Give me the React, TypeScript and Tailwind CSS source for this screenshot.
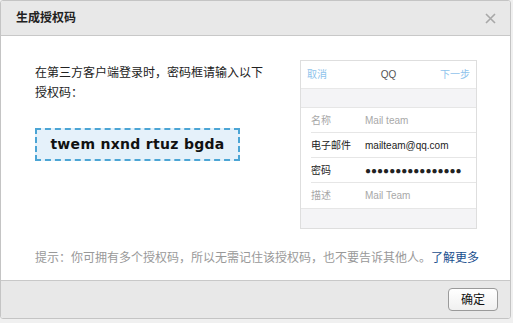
import React from "react";

const cjk = { fontFamily: '"Liberation Sans", "Noto Sans CJK SC", sans-serif' };

function Row({ label, value, dark, last }: { label: string; value: string; dark?: boolean; last?: boolean }) {
  return (
    <div className="pl-[10px] bg-white">
      <div className={`flex items-center h-[25px] ${last ? "" : "border-b border-[#e6e6e6]"}`}>
        <div className={`w-[54px] text-[10px] ${dark ? "text-[#222]" : "text-[#a8a8a8]"}`}>{label}</div>
        <div className={`text-[10px] ${dark ? "text-[#222]" : "text-[#a8a8a8]"}`}>{value}</div>
      </div>
    </div>
  );
}

export default function App() {
  return (
    <div className="w-[513px] h-[323px] bg-[#f0f0f0]" style={cjk}>
      <div className="w-[511px] h-[319px] flex flex-col border border-[#c4c4c4] rounded-[3px] bg-white overflow-hidden">
        <div className="h-[35px] shrink-0 flex items-center justify-between bg-[#e8e8e8] border-b border-[#c8c8c8] pl-[15px] pr-[14px]">
          <div className="text-[12px] font-bold text-[#222]">生成授权码</div>
          <svg width="11" height="11" viewBox="0 0 11 11">
            <path d="M1 1 L10 10 M10 1 L1 10" stroke="#a8a8a8" strokeWidth="1.6" />
          </svg>
        </div>
        <div className="flex-1 flex flex-col pl-[34px]">
          <div className="flex">
            <div className="w-[265px] pt-[27px]">
              <div className="text-[12px] leading-[20px] text-[#222]">
                在第三方客户端登录时，密码框请输入以下
                <br />
                授权码：
              </div>
              <div className="mt-[25px] w-[205px] h-[33px] border-2 border-dashed border-[#4ba5d5] bg-[#e5f1fa] flex items-center justify-center">
                <span
                  className="text-[14px] font-bold text-[#111] tracking-[0.3px]"
                  style={{ fontFamily: '"DejaVu Sans", sans-serif' }}
                >
                  twem nxnd rtuz bgda
                </span>
              </div>
            </div>
            <div className="mt-[24px] w-[177px] border border-[#dedede] bg-[#f4f4f6] flex flex-col">
              <div className="h-[28px] bg-white flex items-center justify-between px-[6px] border-b border-[#e8e8e8]">
                <span className="text-[10px] text-[#8ec3ec]">取消</span>
                <span className="text-[10px] text-[#555] ml-[10px]">QQ</span>
                <span className="text-[10px] text-[#8ec3ec]">下一步</span>
              </div>
              <div className="h-[19px] border-b border-[#e6e6e6]" />
              <Row label="名称" value="Mail team" />
              <Row label="电子邮件" value="mailteam@qq.com" dark />
              <Row label="密码" value="●●●●●●●●●●●●●●●●" dark />
              <Row label="描述" value="Mail Team" last />
              <div className="h-[20px] border-t border-[#e6e6e6]" />
            </div>
          </div>
          <div className="mt-[20px] text-[12px] leading-[18px] text-[#999999]">
            提示：你可拥有多个授权码，所以无需记住该授权码，也不要告诉其他人。
            <span className="text-[#1a4f8e]">了解更多</span>
          </div>
        </div>
        <div className="h-[38px] shrink-0 flex items-center justify-end bg-[#e8e8e8] border-t border-[#c8c8c8] pr-[12px]">
          <button className="w-[50px] h-[23px] rounded-[4px] border border-[#9a9a9a] bg-gradient-to-b from-white to-[#f0f0f0] text-[12px] text-[#111]">
            确定
          </button>
        </div>
      </div>
    </div>
  );
}
